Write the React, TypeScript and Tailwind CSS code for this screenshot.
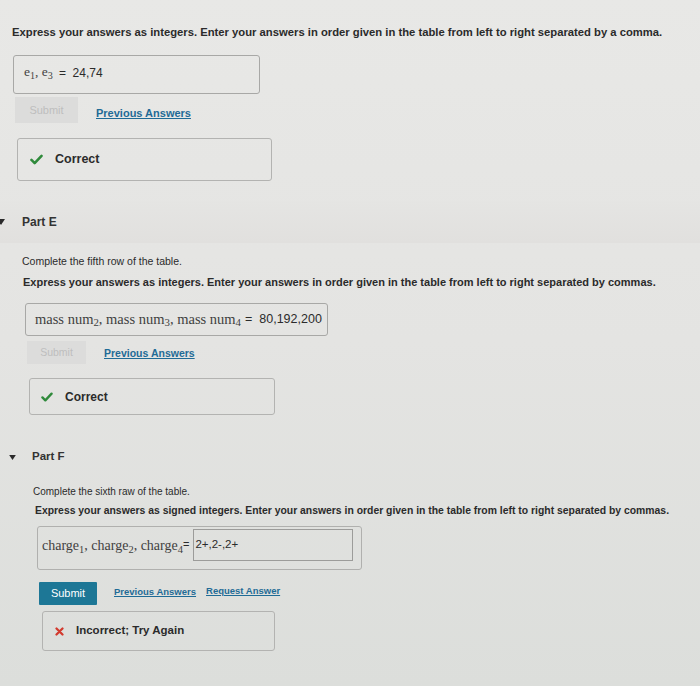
import React from "react";

const sans = { fontFamily: '"Liberation Sans", Arial, sans-serif' };

function Check({ className = "" }: { className?: string }) {
  return (
    <svg viewBox="0 0 14 12" className={className}>
      <path d="M1.5 6.5 L5 10 L12.5 2" fill="none" stroke="#2f8a3b" strokeWidth="2.8" strokeLinecap="round" strokeLinejoin="round" />
    </svg>
  );
}

function Cross({ className = "" }: { className?: string }) {
  return (
    <svg viewBox="0 0 12 12" className={className}>
      <path d="M2 2 L10 10 M10 2 L2 10" fill="none" stroke="#d23a2e" strokeWidth="3" strokeLinecap="round" />
    </svg>
  );
}

function Tri({ className = "" }: { className?: string }) {
  return (
    <svg viewBox="0 0 8 6" className={className}>
      <path d="M0 0 L8 0 L4 6 Z" fill="#2a2a2a" />
    </svg>
  );
}

export default function App() {
  return (
    <div
      className="w-[700px] h-[686px] overflow-hidden bg-gradient-to-b from-[#e8e8e6] via-[#e4e4e2] to-[#dcdedb] text-[#2b2b2b]"
      style={sans}
    >
      {/* Section D tail */}
      <div className="flex flex-col pl-[12px] pt-[25px]">
        <p className="text-[11.25px] font-bold leading-[14px]">
          Express your answers as integers. Enter your answers in order given in the table from left to right separated by a comma.
        </p>
        <div className="ml-[1px] mt-[16px] flex h-[39px] w-[247px] items-center rounded-[3px] border border-[#a8a8a6] pb-[4px] pl-[10px] text-[12px]">
          <span className="text-[13.5px] text-[#444]" style={{ fontFamily: '"Liberation Serif", serif' }}>
            e<sub>1</sub>, e<sub>3</sub>
          </span>
          <span className="ml-[6px]">= &nbsp;24,74</span>
        </div>
        <div className="ml-[3px] mt-[3px] flex items-center">
          <div className="flex h-[26px] w-[63px] items-center justify-center bg-[#dcdcdb] text-[11px] text-[#bebebe]">
            Submit
          </div>
          <span className="ml-[18px] mt-[6px] text-[11px] font-bold text-[#1f6b96] underline">Previous Answers</span>
        </div>
        <div className="ml-[5px] mt-[15px] flex h-[43px] w-[255px] items-center rounded-[3px] border border-[#b3b3b1] pl-[12px]">
          <Check className="h-[11px] w-[13px]" />
          <span className="ml-[12px] text-[12.5px] font-bold">Correct</span>
        </div>
      </div>

      {/* Part E */}
      <div className="mt-[20px] flex flex-col">
        <div className="flex h-[42px] items-center bg-gradient-to-b from-[#e5e5e3] to-[#e1e0de]">
          <Tri className="ml-[-3px] h-[6px] w-[8px]" />
          <span className="ml-[17px] text-[12px] font-bold text-[#333]">Part E</span>
        </div>
        <div className="flex flex-col pl-[22px] pt-[12px]">
          <p className="text-[10.5px] leading-[13px]">Complete the fifth row of the table.</p>
          <p className="mt-[8px] pl-[1px] text-[11px] font-bold leading-[13px]">
            Express your answers as integers. Enter your answers in order given in the table from left to right separated by commas.
          </p>
          <div className="ml-[3px] mt-[14px] flex h-[33px] w-[303px] items-center rounded-[3px] border border-[#a8a8a6] pl-[9px] text-[12.5px]">
            <span className="text-[14.5px] text-[#3f3f3f]" style={{ fontFamily: '"Liberation Serif", serif' }}>
              mass num<sub>2</sub>, mass num<sub>3</sub>, mass num<sub>4</sub>
            </span>
            <span className="ml-[4px]">= &nbsp;80,192,200</span>
          </div>
          <div className="ml-[5px] mt-[5px] flex items-center">
            <div className="flex h-[23px] w-[59px] items-center justify-center bg-[#dcdcdb] text-[10.5px] text-[#bebebe]">
              Submit
            </div>
            <span className="ml-[18px] mt-[2px] text-[10.5px] font-bold text-[#1f6b96] underline">Previous Answers</span>
          </div>
          <div className="ml-[7px] mt-[14px] flex h-[37px] w-[246px] items-center rounded-[3px] border border-[#b3b3b1] pl-[11px]">
            <Check className="h-[10px] w-[12px]" />
            <span className="ml-[12px] text-[12px] font-bold">Correct</span>
          </div>
        </div>
      </div>

      {/* Part F */}
      <div className="mt-[24px] flex flex-col">
        <div className="flex h-[36px] items-center">
          <Tri className="ml-[9px] h-[5px] w-[7px]" />
          <span className="ml-[16px] text-[11.5px] font-bold text-[#333]">Part F</span>
        </div>
        <div className="flex flex-col pl-[33px] pt-[10px]">
          <p className="text-[10px] leading-[13px]">Complete the sixth raw of the table.</p>
          <p className="mt-[6px] pl-[2px] text-[10.4px] font-bold leading-[13px]">
            Express your answers as signed integers. Enter your answers in order given in the table from left to right separated by commas.
          </p>
          <div className="ml-[4px] mt-[9px] flex h-[44px] w-[325px] items-start rounded-[3px] border border-[#b0b0ae] pl-[4px] pt-[2px]">
            <span className="mt-[6px] text-[14px] text-[#3f3f3f]" style={{ fontFamily: '"Liberation Serif", serif' }}>
              charge<sub>1</sub>, charge<sub>2</sub>, charge<sub>4</sub>
            </span>
            <span className="mt-[7px] text-[11px]">=</span>
            <div className="ml-[4px] flex h-[32px] w-[160px] items-start border border-[#9c9c9a] pl-[1px] pt-[6px] text-[11.5px]">
              2+,2-,2+
            </div>
          </div>
          <div className="ml-[6px] mt-[12px] flex items-start">
            <div className="flex h-[23px] w-[58px] items-center justify-center rounded-[1px] bg-[#1d7796] text-[11px] text-white">
              Submit
            </div>
            <span className="ml-[17px] mt-[3px] text-[9.5px] font-bold text-[#1f6b96] underline">Previous Answers</span>
            <span className="ml-[10px] mt-[2px] text-[9.5px] font-bold text-[#1f6b96] underline">Request Answer</span>
          </div>
          <div className="ml-[9px] mt-[6px] flex h-[40px] w-[233px] items-center rounded-[3px] border border-[#b3b3b1] pl-[12px]">
            <Cross className="h-[9px] w-[9px]" />
            <span className="ml-[12px] text-[11.5px] font-bold">Incorrect; Try Again</span>
          </div>
        </div>
      </div>
    </div>
  );
}
